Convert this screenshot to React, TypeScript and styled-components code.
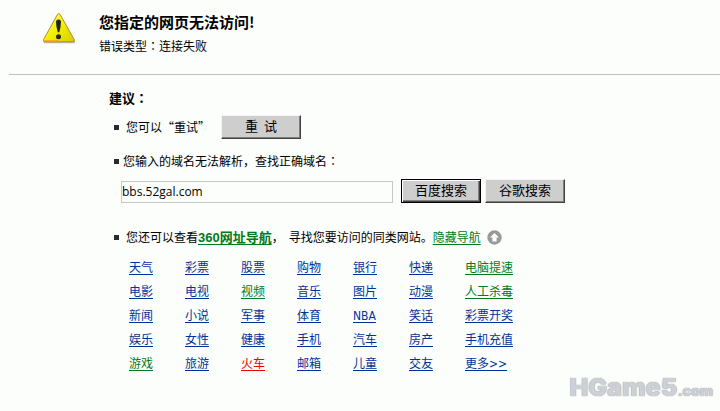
import React from "react";
import styled, { createGlobalStyle } from "styled-components";

const GlobalStyle = createGlobalStyle`
  * { box-sizing: border-box; }
  body {
    margin: 0;
    background: #fcfefc;
    color: #000;
    font: 12px/20px "Noto Sans CJK SC", sans-serif;
  }
  h1, h2, p, ul { margin: 0; padding: 0; }
`;

type Tone = "blue" | "green" | "red";
const tones: Record<Tone, string> = { blue: "#003399", green: "#007a22", red: "#f00000" };

const Page = styled.div`
  min-height: 100vh;
  padding-left: 9px;
  position: relative;
`;

const Header = styled.header`
  display: flex;
  gap: 22px;
  padding: 12px 16px 18px 33px;
  border-bottom: 1px solid #c0c0c0;
`;

const Heading = styled.div`
  display: flex;
  flex-direction: column;
  gap: 4px;
  margin-left: 1px;
`;

const Title = styled.h1`
  font-size: 15px;
  line-height: 20px;
`;

const Colon = styled.span`
  font-family: "Noto Sans CJK TC", sans-serif;
`;

const Main = styled.main`
  padding: 13px 16px 0 100px;
`;

const Subtitle = styled.h2`
  font-size: 13px;
  line-height: 20px;
`;

const Row = styled.div<{ $top: number; $gap?: number }>`
  display: flex;
  align-items: center;
  margin-top: ${(p) => p.$top}px;
  padding-left: 5px;

  &::before {
    content: "";
    width: 5px;
    height: 5px;
    flex: none;
    margin-right: ${(p) => p.$gap ?? 7}px;
    background: #2a2a2a;
  }
`;

const Button = styled.button<{ $primary?: boolean }>`
  width: 80px;
  height: 24px;
  flex: none;
  padding: 0 0 2px;
  font: 13px/16px "Noto Sans CJK SC", sans-serif;
  white-space: pre;
  color: #000;
  background: #cecece;
  border: 1px solid;
  border-color: ${(p) => (p.$primary ? "#000" : "#f4f4f4 #404040 #404040 #f4f4f4")};
  border-radius: 0;
  box-shadow: ${(p) =>
    p.$primary
      ? "inset 1px 1px #fff, inset -1px -1px #404040, inset -2px -2px #808080"
      : "inset -1px -1px #808080"};
`;

const RetryButton = styled(Button)`
  margin-left: 11px;
`;

const SearchForm = styled.form`
  display: flex;
  align-items: flex-end;
  gap: 4px;
  margin-top: 8px;
  padding-left: 12px;
`;

const DomainInput = styled.input`
  flex: 0 1 272px;
  min-width: 80px;
  height: 22px;
  margin-right: 4px;
  padding: 0 0 2px;
  font: 12px/18px "Open Sans", sans-serif;
  color: #000;
  background: #fcfefc;
  border: 1px solid #c8c8c8;
  border-radius: 0;
  outline: none;
`;

const Link = styled.a<{ $tone?: Tone }>`
  color: ${(p) => tones[p.$tone ?? "blue"]};
  text-decoration: underline 1px;
  text-underline-offset: 2px;
`;

const StrongLink = styled(Link)`
  font-size: 13px;
  font-weight: 700;
  font-family: "Liberation Sans", "Noto Sans CJK SC", sans-serif;
`;

const Continued = styled.span`
  margin-left: 5px;
`;

const CollapseButton = styled.button`
  display: flex;
  margin-left: 6px;
  padding: 0;
  border: 0;
  background: none;
`;

const LinkGrid = styled.ul`
  display: grid;
  grid-template-columns: repeat(6, 56px) auto;
  grid-auto-rows: 24px;
  align-items: center;
  margin-top: 8px;
  padding-left: 20px;
  list-style: none;
  font-family: "DejaVu Sans Condensed", "Noto Sans CJK SC", sans-serif;
`;

const Watermark = styled.div`
  position: absolute;
  right: 7px;
  bottom: 4px;
  font: 900 25px/32px "Inter", "Open Sans", sans-serif;
  color: #cdd0d6;
  text-shadow: 0 0 1px #a8a8a8, 0 0 1px #a8a8a8;
`;

const WatermarkSuffix = styled.span`
  font-size: 14px;
`;

const links: [string, Tone?][] = [
  ["天气"], ["彩票"], ["股票"], ["购物"], ["银行"], ["快递"], ["电脑提速", "green"],
  ["电影"], ["电视"], ["视频", "green"], ["音乐"], ["图片"], ["动漫"], ["人工杀毒", "green"],
  ["新闻"], ["小说"], ["军事"], ["体育"], ["NBA"], ["笑话"], ["彩票开奖"],
  ["娱乐"], ["女性"], ["健康"], ["手机"], ["汽车"], ["房产"], ["手机充值"],
  ["游戏", "green"], ["旅游"], ["火车", "red"], ["邮箱"], ["儿童"], ["交友"], ["更多>>"],
];

function WarningIcon() {
  return (
    <svg width="34" height="32" viewBox="0 0 34 32" aria-hidden="true">
      <defs>
        <linearGradient id="warn" x1="0" y1="0" x2="1" y2="1">
          <stop offset="0" stopColor="#ffff70" />
          <stop offset="0.5" stopColor="#f4f000" />
          <stop offset="1" stopColor="#d4cc00" />
        </linearGradient>
      </defs>
      <path d="M16 3.5Q17 2 18.2 3.5L33 29Q33.6 31.3 31.5 31.3H3Q1 31.3 1.6 29.4Z" fill="#b8b8b8" />
      <path d="M15.5 2.3Q16.8.6 18 2.3L32.2 27.5Q32.8 29.8 30.6 29.8H3Q.8 29.8 1.6 27.5Z" fill="url(#warn)" stroke="#b88a38" strokeWidth="1" />
      <path d="M2.5 29H17" stroke="#f59a20" strokeWidth="1.4" />
      <path d="M14 10Q14 7.5 16.5 7.5T19 10Q19 14 17.3 20.3H15.8Q14 14 14 10Z" fill="#222418" />
      <circle cx="16.5" cy="24.7" r="2.5" fill="#222418" />
    </svg>
  );
}

function UpIcon() {
  return (
    <svg width="15" height="15" viewBox="0 0 15 15" aria-hidden="true">
      <circle cx="7.5" cy="7.5" r="7.2" fill="#999" />
      <path d="M7.5 3L12 7.6H9.6V11.5H5.4V7.6H3Z" fill="#fff" />
    </svg>
  );
}

export default function App() {
  return (
    <>
      <GlobalStyle />
      <Page>
        <Header>
          <WarningIcon />
          <Heading>
            <Title>您指定的网页无法访问!</Title>
            <p>错误类型<Colon>：</Colon>连接失败</p>
          </Heading>
        </Header>
        <Main>
          <Subtitle>建议<Colon>：</Colon></Subtitle>
          <Row $top={7}>
            <span>您可以“重试”</span>
            <RetryButton type="button">{"重  试"}</RetryButton>
          </Row>
          <Row $top={12} $gap={4}>
            <label htmlFor="domain">您输入的域名无法解析，查找正确域名<Colon>：</Colon></label>
          </Row>
          <SearchForm onSubmit={(e) => e.preventDefault()}>
            <DomainInput id="domain" type="text" defaultValue="bbs.52gal.com" />
            <Button type="submit" $primary>百度搜索</Button>
            <Button type="button">谷歌搜索</Button>
          </SearchForm>
          <Row $top={24}>
            <p>
              您还可以查看<StrongLink href="#nav" $tone="green">360网址导航</StrongLink>，
              <Continued>寻找您要访问的同类网站。</Continued>
              <Link href="#links" $tone="green">隐藏导航</Link>
            </p>
            <CollapseButton type="button" aria-label="隐藏导航">
              <UpIcon />
            </CollapseButton>
          </Row>
          <LinkGrid id="links">
            {links.map(([text, tone]) => (
              <li key={text}>
                <Link href="#" $tone={tone}>{text}</Link>
              </li>
            ))}
          </LinkGrid>
        </Main>
        <Watermark>
          HGame5<WatermarkSuffix>.com</WatermarkSuffix>
        </Watermark>
      </Page>
    </>
  );
}
